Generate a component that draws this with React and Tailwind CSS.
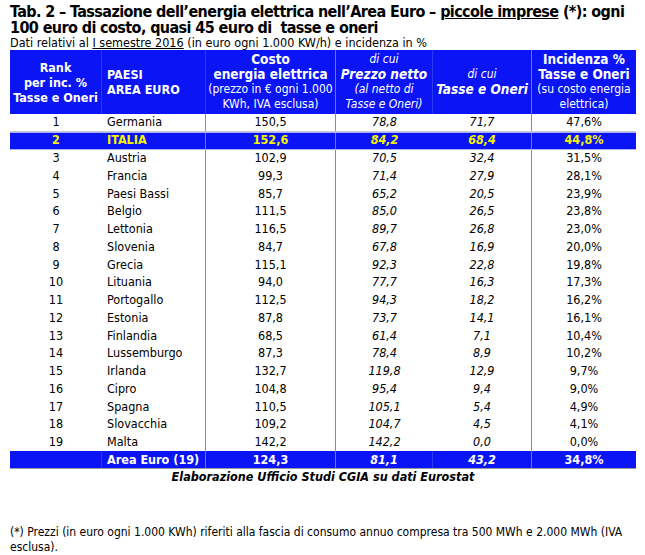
import React from "react";

const rows = [
  ["1", "Germania", "150,5", "78,8", "71,7", "47,6%"],
  ["2", "ITALIA", "152,6", "84,2", "68,4", "44,8%"],
  ["3", "Austria", "102,9", "70,5", "32,4", "31,5%"],
  ["4", "Francia", "99,3", "71,4", "27,9", "28,1%"],
  ["5", "Paesi Bassi", "85,7", "65,2", "20,5", "23,9%"],
  ["6", "Belgio", "111,5", "85,0", "26,5", "23,8%"],
  ["7", "Lettonia", "116,5", "89,7", "26,8", "23,0%"],
  ["8", "Slovenia", "84,7", "67,8", "16,9", "20,0%"],
  ["9", "Grecia", "115,1", "92,3", "22,8", "19,8%"],
  ["10", "Lituania", "94,0", "77,7", "16,3", "17,3%"],
  ["11", "Portogallo", "112,5", "94,3", "18,2", "16,2%"],
  ["12", "Estonia", "87,8", "73,7", "14,1", "16,1%"],
  ["13", "Finlandia", "68,5", "61,4", "7,1", "10,4%"],
  ["14", "Lussemburgo", "87,3", "78,4", "8,9", "10,2%"],
  ["15", "Irlanda", "132,7", "119,8", "12,9", "9,7%"],
  ["16", "Cipro", "104,8", "95,4", "9,4", "9,0%"],
  ["17", "Spagna", "110,5", "105,1", "5,4", "4,9%"],
  ["18", "Slovacchia", "109,2", "104,7", "4,5", "4,1%"],
  ["19", "Malta", "142,2", "142,2", "0,0", "0,0%"],
];

const grid = "grid grid-cols-[92px_104px_130px_97px_99px_104px]";

function BodyRow({ r, i }) {
  const italia = r[1] === "ITALIA";
  const first = i === 0;
  const base = italia
    ? "bg-[#0a14f5] text-[#f5f500] font-bold border-y border-[#aab0ff]"
    : first
    ? "bg-white text-black border-b border-[#c8c8d8]"
    : "bg-white text-black";
  const sep = italia ? "border-r border-[#6a72ff]" : "border-r border-[#8c8c8c]";
  return (
    <div className={`${grid} h-[17.75px] items-stretch text-[12.5px] leading-none ${base}`}>
      <div className="flex items-center justify-center">{r[0]}</div>
      <div className={`flex items-center pl-[5px] ${sep}`}>{r[1]}</div>
      <div className={`flex items-center justify-center ${sep}`}>{r[2]}</div>
      <div className="flex items-center justify-center italic">{r[3]}</div>
      <div className={`flex items-center justify-center italic ${sep}`}>{r[4]}</div>
      <div className="flex items-center justify-center">{r[5]}</div>
    </div>
  );
}

export default function App() {
  return (
    <div
      className="w-[645px] h-[555px] bg-white text-black overflow-hidden font-stretch-condensed"
      style={{ fontFamily: '"DejaVu Sans Condensed", "DejaVu Sans", sans-serif' }}
    >
      <div className="pl-[10px] pt-[4px]">
        <div className="text-[16px] font-bold leading-[16px] tracking-[-0.6px] whitespace-nowrap">
          Tab. 2 – Tassazione dell’energia elettrica nell’Area Euro – <span className="underline">piccole imprese</span> (*): ogni
          <br />
          100 euro di costo, quasi 45 euro di&nbsp; tasse e oneri
        </div>
        <div className="text-[12.5px] leading-[14px] whitespace-nowrap">
          Dati relativi al <span className="underline">I semestre 2016</span> (in euro ogni 1.000 KW/h) e incidenza in %
        </div>

        <div className="w-[626px]">
          {/* header */}
          <div className={`${grid} h-[64px] bg-[#0a14f5] text-white text-[12px] leading-[15px] whitespace-nowrap`}>
            <div className="flex flex-col items-center justify-center font-bold text-center text-[12.5px] border-r border-[#2a38f8]">
              <span>Rank</span>
              <span>per inc. %</span>
              <span>Tasse e Oneri</span>
            </div>
            <div className="flex flex-col justify-center font-bold text-[12.5px] pl-[5px] border-r border-[#2a38f8]">
              <span>PAESI</span>
              <span>AREA EURO</span>
            </div>
            <div className="flex flex-col items-center justify-center text-center border-r border-[#6a72ff]">
              <span className="font-bold text-[13.5px]">Costo</span>
              <span className="font-bold text-[13.5px]">energia elettrica</span>
              <span>(prezzo in € ogni 1.000</span>
              <span>KWh, IVA esclusa)</span>
            </div>
            <div className="flex flex-col items-center justify-center text-center italic border-r border-[#2a38f8]">
              <span>di cui</span>
              <span className="font-bold text-[13.5px]">Prezzo netto</span>
              <span>(al netto di</span>
              <span>Tasse e Oneri)</span>
            </div>
            <div className="flex flex-col items-center justify-center text-center italic border-r border-[#6a72ff]">
              <span>di cui</span>
              <span className="font-bold text-[13.5px]">Tasse e Oneri</span>
            </div>
            <div className="flex flex-col items-center justify-center text-center">
              <span className="font-bold text-[13.5px]">Incidenza %</span>
              <span className="font-bold text-[13.5px]">Tasse e Oneri</span>
              <span>(su costo energia</span>
              <span>elettrica)</span>
            </div>
          </div>

          {rows.map((r, i) => (
            <BodyRow key={i} r={r} i={i} />
          ))}

          {/* total */}
          <div className={`${grid} h-[18px] bg-[#0a14f5] text-white font-bold text-[12.5px] leading-none border-b border-[#9a9a9a]`}>
            <div className="border-r border-[#2a38f8]"></div>
            <div className="flex items-center pl-[5px] border-r border-[#6a72ff]">Area Euro (19)</div>
            <div className="flex items-center justify-center border-r border-[#6a72ff]">124,3</div>
            <div className="flex items-center justify-center italic border-r border-[#2a38f8]">81,1</div>
            <div className="flex items-center justify-center italic border-r border-[#6a72ff]">43,2</div>
            <div className="flex items-center justify-center">34,8%</div>
          </div>

          <div className="text-center font-bold italic text-[12.5px] leading-[14px] mt-[1px]">
            Elaborazione Ufficio Studi CGIA su dati Eurostat
          </div>
        </div>

        <div className="text-[12px] leading-[15px] mt-[41px] w-[630px]">
          (*) Prezzi (in euro ogni 1.000 KWh) riferiti alla fascia di consumo annuo compresa tra 500 MWh e 2.000 MWh (IVA esclusa).
        </div>
      </div>
    </div>
  );
}
